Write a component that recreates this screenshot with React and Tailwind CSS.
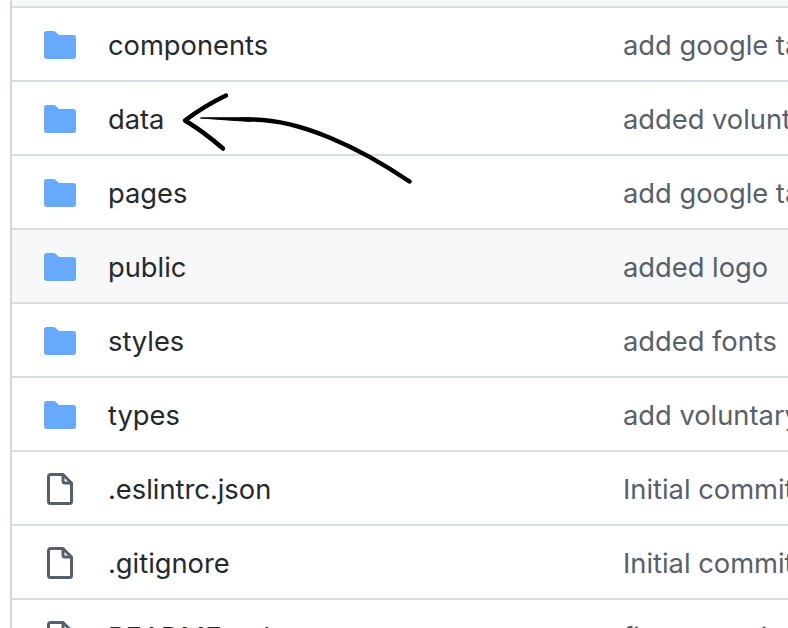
const rows = [
  { type: "dir", name: "components", msg: "add google tag" },
  { type: "dir", name: "data", msg: "added voluntary" },
  { type: "dir", name: "pages", msg: "add google tag" },
  { type: "dir", name: "public", msg: "added logo", hover: true },
  { type: "dir", name: "styles", msg: "added fonts" },
  { type: "dir", name: "types", msg: "add voluntary" },
  { type: "file", name: ".eslintrc.json", msg: "Initial commit" },
  { type: "file", name: ".gitignore", msg: "Initial commit" },
  { type: "file", name: "README.md", msg: "first commit" },
];

function FolderIcon() {
  return (
    <svg width="32" height="28" viewBox="0 0 32 28" fill="#67a9fb">
      <path d="M0 3a3 3 0 0 1 3-3h6.500a3 3 0 0 1 2 .8L15 4h14a3 3 0 0 1 3 3v18a3 3 0 0 1-3 3H3a3 3 0 0 1-3-3Z" />
    </svg>
  );
}

function FileIcon() {
  return (
    <svg width="26" height="32" viewBox="0 0 26 32" fill="none" stroke="#57606a" strokeWidth="3" strokeLinejoin="round">
      <path d="M3.500 1.500h12.500l8.500 8.500v18.500a2 2 0 0 1-2 2h-19a2 2 0 0 1-2-2v-25a2 2 0 0 1 2-2Z" />
      <path d="M16 1.500v6.500a2 2 0 0 0 2 2h6.500" />
    </svg>
  );
}

function Row({ row }) {
  return (
    <div className={`flex items-center h-[74px] shrink-0 pt-[2px] border-t-2 border-[#d8dee4] ${row.hover ? "bg-[#f6f8fa]" : "bg-white"}`}>
      <div className="w-[32px] shrink-0 ml-[32px] flex justify-center">
        {row.type === "dir" ? <FolderIcon /> : <FileIcon />}
      </div>
      <div className="ml-[32px] w-[515px] shrink-0 pt-[2px] text-[27.3px] text-[#24292f] whitespace-nowrap">{row.name}</div>
      <div className="shrink-0 pt-[2px] text-[27.3px] text-[#57606a] whitespace-nowrap">{row.msg}</div>
    </div>
  );
}

export default function App() {
  return (
    <div className="relative h-[628px] w-[788px] overflow-hidden bg-white font-['Inter',sans-serif]">
      <div className="ml-[10px] border-l-2 border-[#d0d7de] h-full flex flex-col">
        <div className="h-[6px] shrink-0 bg-[#f6f8fa]" />
        {rows.map((row) => (
          <Row key={row.name} row={row} />
        ))}
      </div>
      <svg className="absolute left-0 top-0 pointer-events-none" width="788" height="628" fill="none" stroke="#000" strokeLinecap="round" strokeLinejoin="round">
        <path d="M226 95.500 Q204 106 185 120.500 Q204 132 223 148.500" strokeWidth="4.500" />
        <path d="M201 118 C220 117.500 235 118 250 117.500 L250 121.500 C235 120.500 220 119.500 201 118 Z" fill="#000" strokeWidth="1" />
        <path d="M250 119.500 C300 119 360 148 409.500 181.500" strokeWidth="4.500" />
      </svg>
    </div>
  );
}
